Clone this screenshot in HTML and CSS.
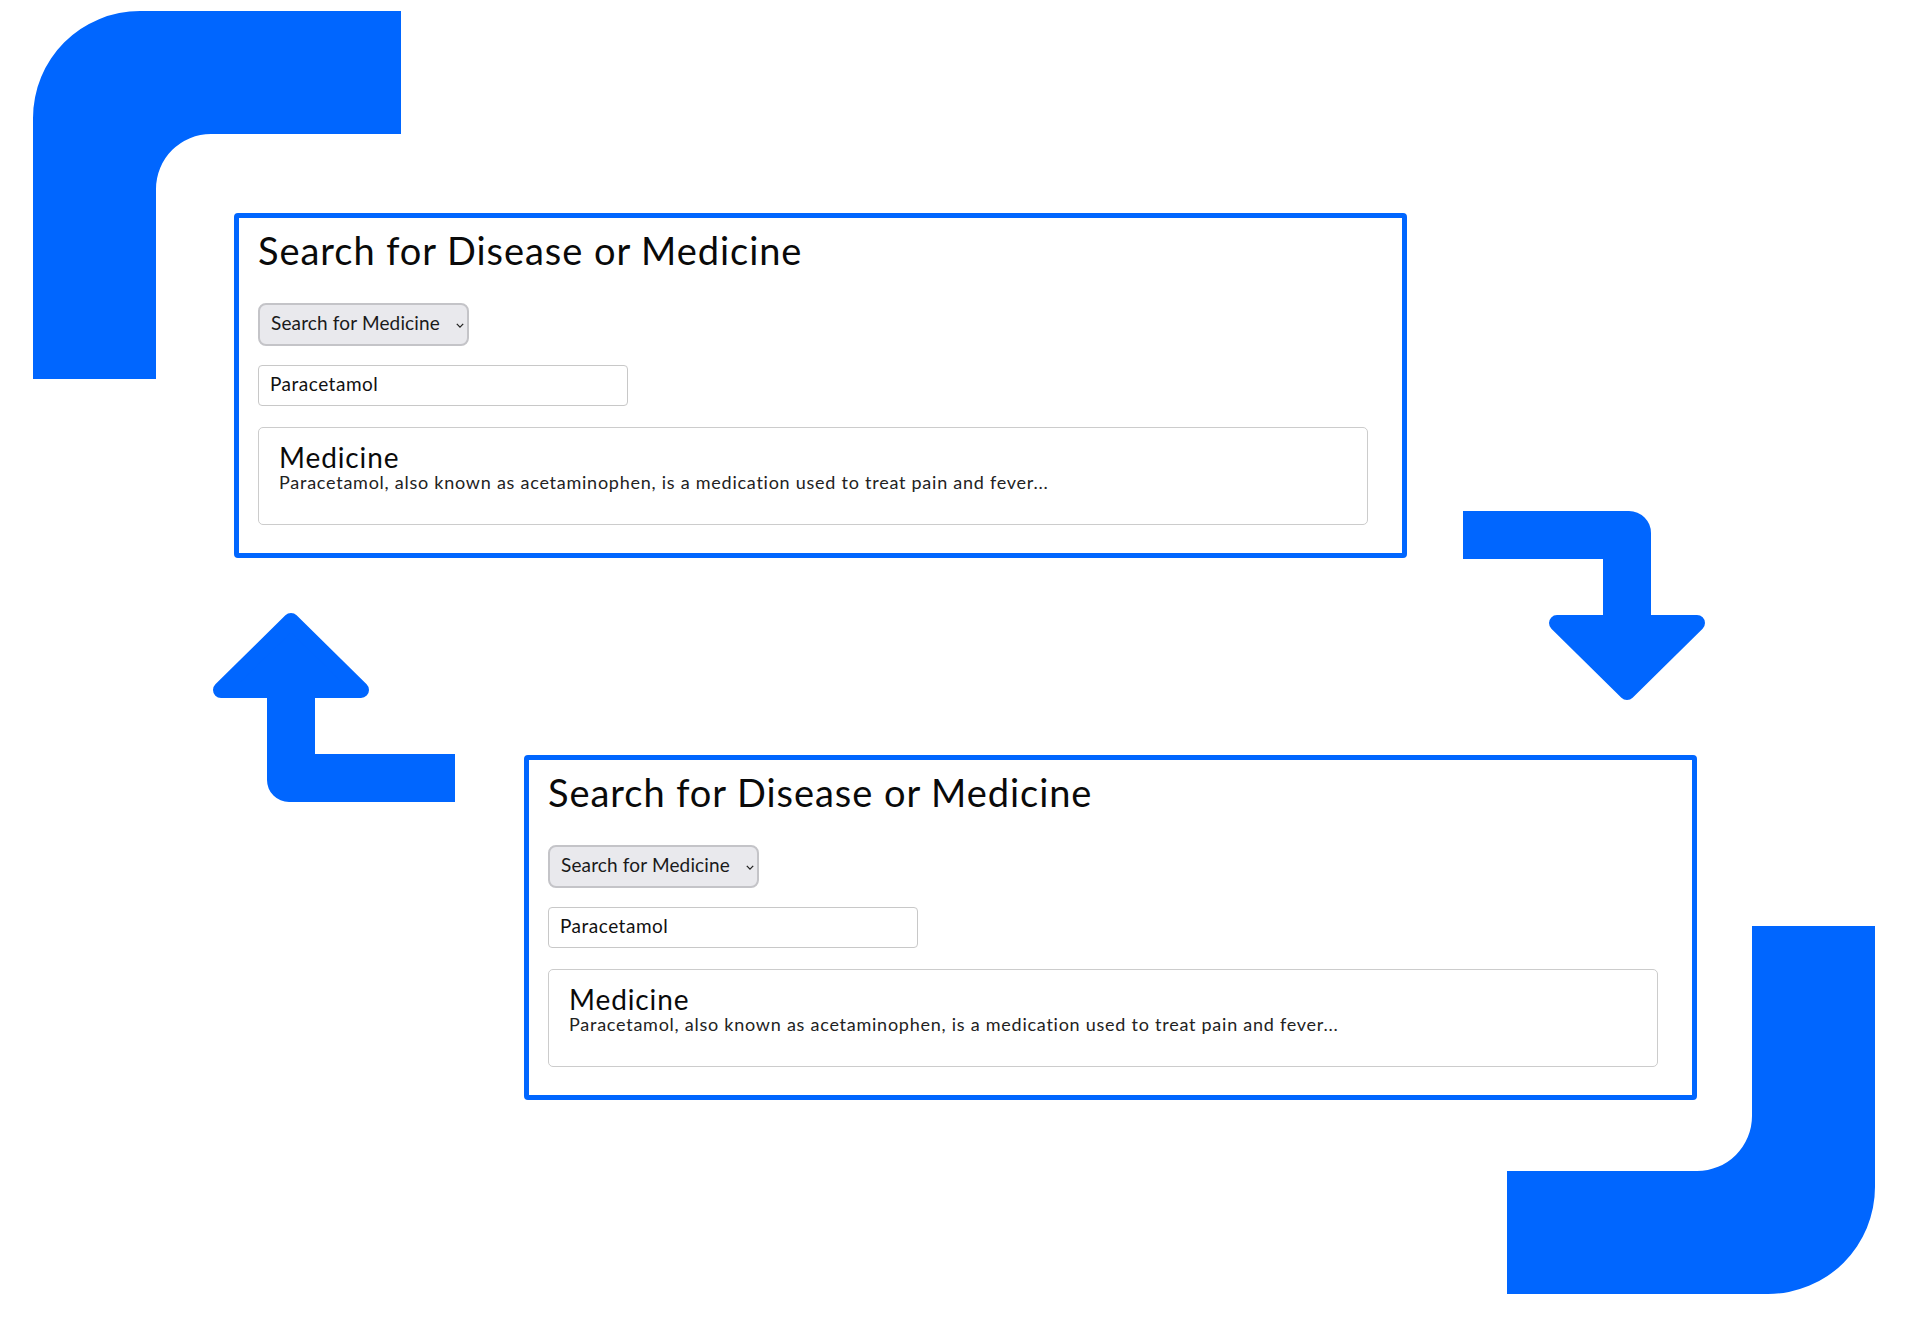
FILE: index.html
```html
<!DOCTYPE html>
<html lang="en">
<head>
<meta charset="utf-8">
<title>Search for Disease or Medicine</title>
<link rel="stylesheet" href="styles.css">
</head>
<body>
<div class="canvas">
  <svg class="deco corner corner-tl" viewBox="0 0 368 368" aria-hidden="true">
    <path d="M0,368 V107 A107,107 0 0 1 107,0 H368 V123 H178 A55,55 0 0 0 123,178 V368 Z"/>
  </svg>
  <svg class="deco corner corner-br" viewBox="0 0 368 368" aria-hidden="true">
    <path d="M0,368 V107 A107,107 0 0 1 107,0 H368 V123 H178 A55,55 0 0 0 123,178 V368 Z"/>
  </svg>
  <svg class="deco arrow arrow-dr" viewBox="0 0 242 189" aria-hidden="true">
    <path d="M0,0 H166 A22,22 0 0 1 188,22 V106 H140 V48 H0 Z"/>
    <polygon class="head" points="94,112 234,112 164,181"/>
  </svg>
  <svg class="deco arrow arrow-ul" viewBox="0 0 242 189" aria-hidden="true">
    <path d="M0,0 H166 A22,22 0 0 1 188,22 V106 H140 V48 H0 Z"/>
    <polygon class="head" points="94,112 234,112 164,181"/>
  </svg>

  <section class="card card-1">
    <h1 class="card-title">Search for Disease or Medicine</h1>
    <div class="select">
      <span class="select-label">Search for Medicine</span>
      <svg class="chev" viewBox="0 0 10 6" aria-hidden="true"><path d="M1,1 L5,5 L9,1"/></svg>
    </div>
    <input class="field" type="text" value="Paracetamol" readonly>
    <div class="result">
      <h2 class="result-title">Medicine</h2>
      <p class="result-text">Paracetamol, also known as acetaminophen, is a medication used to treat pain and fever...</p>
    </div>
  </section>

  <section class="card card-2">
    <h1 class="card-title">Search for Disease or Medicine</h1>
    <div class="select">
      <span class="select-label">Search for Medicine</span>
      <svg class="chev" viewBox="0 0 10 6" aria-hidden="true"><path d="M1,1 L5,5 L9,1"/></svg>
    </div>
    <input class="field" type="text" value="Paracetamol" readonly>
    <div class="result">
      <h2 class="result-title">Medicine</h2>
      <p class="result-text">Paracetamol, also known as acetaminophen, is a medication used to treat pain and fever...</p>
    </div>
  </section>
</div>
</body>
</html>
```

FILE: styles.css
```css
html, body {
  margin: 0;
  padding: 0;
  background: #ffffff;
}

body {
  font-family: "Lato", "Noto Sans", sans-serif;
  color: #111111;
}

.canvas {
  position: relative;
  width: 1920px;
  height: 1326px;
  overflow: hidden;
}

.deco {
  position: absolute;
  display: block;
  fill: #0066ff;
}

.corner {
  width: 368px;
  height: 368px;
}

.corner-tl {
  left: 33px;
  top: 11px;
}

.corner-br {
  left: 1507px;
  top: 926px;
  transform: rotate(180deg);
}

.arrow {
  width: 242px;
  height: 189px;
  overflow: visible;
}

.arrow .head {
  fill: #0066ff;
  stroke: #0066ff;
  stroke-width: 16;
  stroke-linejoin: round;
}

.arrow-dr {
  left: 1463px;
  top: 511px;
}

.arrow-ul {
  left: 213px;
  top: 613px;
  transform: rotate(180deg);
}

.card {
  position: absolute;
  box-sizing: border-box;
  width: 1173px;
  height: 345px;
  border: 5px solid #0066ff;
  border-radius: 4px;
  background: #ffffff;
  padding: 9px 34px 0 19px;
  display: flex;
  flex-direction: column;
  align-items: flex-start;
}

.card-1 {
  left: 234px;
  top: 213px;
}

.card-2 {
  left: 524px;
  top: 755px;
}

.card-title {
  margin: 0;
  font-size: 38px;
  line-height: 46px;
  font-weight: 400;
  letter-spacing: 0.95px;
  color: #0a0a0a;
}

.select {
  box-sizing: border-box;
  margin-top: 30px;
  width: 211px;
  height: 43px;
  border: 2px solid #c4c4c8;
  border-radius: 8px;
  background: #e9e9ed;
  display: flex;
  align-items: center;
  padding: 0 0 4px 11px;
}

.select-label {
  font-size: 19px;
  letter-spacing: 0.15px;
  color: #1a1a1a;
  width: 185px;
  white-space: nowrap;
}

.chev {
  width: 8px;
  height: 5px;
  fill: none;
  stroke: #222;
  stroke-width: 1.6;
  margin-top: 6px;
}

.field {
  box-sizing: border-box;
  margin: 19px 0 0 0;
  width: 370px;
  height: 41px;
  border: 1px solid #c8c8c8;
  border-radius: 4px;
  padding: 0 11px 5px 11px;
  font-family: "Lato", "Noto Sans", sans-serif;
  font-size: 19px;
  letter-spacing: 0.5px;
  color: #111;
  background: #fff;
  outline: none;
}

.result {
  box-sizing: border-box;
  margin-top: 21px;
  width: 1110px;
  height: 98px;
  border: 1px solid #cccccc;
  border-radius: 5px;
  padding: 14px 20px 0 20px;
}

.result-title {
  margin: 0;
  font-size: 28px;
  line-height: 30px;
  font-weight: 400;
  letter-spacing: 0.9px;
  color: #0a0a0a;
}

.result-text {
  margin: 0;
  font-size: 18px;
  line-height: 21px;
  letter-spacing: 0.75px;
  color: #222222;
}
```
